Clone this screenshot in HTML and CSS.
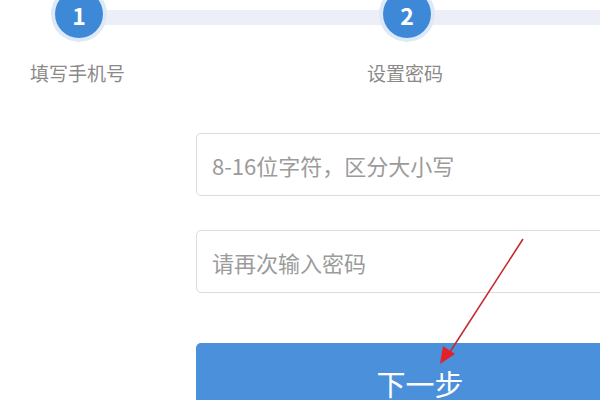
FILE: index.html
```html
<!DOCTYPE html>
<html lang="zh-CN">
<head>
<meta charset="utf-8">
<title>设置密码</title>
<link rel="stylesheet" href="styles.css">
</head>
<body>
<div class="page">
  <div class="steps">
    <div class="dot">1</div>
    <div class="track"></div>
    <div class="dot">2</div>
    <div class="track"></div>
  </div>
  <div class="labels">
    <span class="label">填写手机号</span>
    <span class="label">设置密码</span>
  </div>
  <form class="form">
    <input class="field" type="password" placeholder="8-16位字符，区分大小写">
    <input class="field" type="password" placeholder="请再次输入密码">
    <button class="next" type="button">下一步</button>
  </form>
  <svg class="arrow" width="600" height="400" viewBox="0 0 600 400">
    <line x1="523" y1="239" x2="448" y2="355" stroke="#c42a30" stroke-width="1.6"/>
    <polygon points="440,364 443,346 455,354" fill="#e3202b"/>
  </svg>
</div>
</body>
</html>
```
FILE: styles.css
```css
html, body {
  margin: 0;
  padding: 0;
  background: #ffffff;
  overflow: hidden;
}
.page {
  position: relative;
  width: 600px;
  height: 400px;
  overflow: hidden;
  font-family: "Noto Sans CJK SC", "Liberation Sans", sans-serif;
}
.steps {
  display: flex;
  align-items: flex-start;
  margin-top: -10px;
  padding-left: 55px;
}
.dot {
  flex: none;
  width: 48px;
  height: 48px;
  border-radius: 50%;
  background: #3e88d8;
  box-shadow: 0 0 0 4px #dde9f7;
  color: #ffffff;
  font-size: 23px;
  font-weight: 700;
  line-height: 50px;
  text-align: center;
  position: relative;
  z-index: 1;
}
.track {
  flex: 1;
  height: 15px;
  margin-top: 20px;
  background: #eceef8;
}
.steps .track:nth-child(2) {
  flex: none;
  width: 280px;
}
.labels {
  display: flex;
  gap: 242px;
  padding-left: 30px;
  margin-top: 25px;
}
.label {
  font-size: 19px;
  line-height: 19px;
  color: #8a8a8a;
}
.form {
  display: flex;
  flex-direction: column;
  width: 460px;
  margin-left: 196px;
  margin-top: 51px;
}
.field {
  box-sizing: border-box;
  height: 63px;
  border: 1px solid #dcdcdc;
  border-radius: 5px;
  padding: 0 15px;
  font-family: inherit;
  font-size: 22px;
  color: #333;
  background: #fff;
  outline: none;
}
.field::placeholder {
  color: #9b9b9b;
}
.field + .field {
  margin-top: 34px;
}
.next {
  margin-top: 50px;
  padding: 25px 0;
  width: 448px;
  border: none;
  border-radius: 5px;
  background: #4a90da;
  color: #ffffff;
  font-family: inherit;
  font-size: 29px;
  line-height: 30px;
  text-align: center;
}
.arrow {
  position: absolute;
  left: 0;
  top: 0;
  pointer-events: none;
}
```
